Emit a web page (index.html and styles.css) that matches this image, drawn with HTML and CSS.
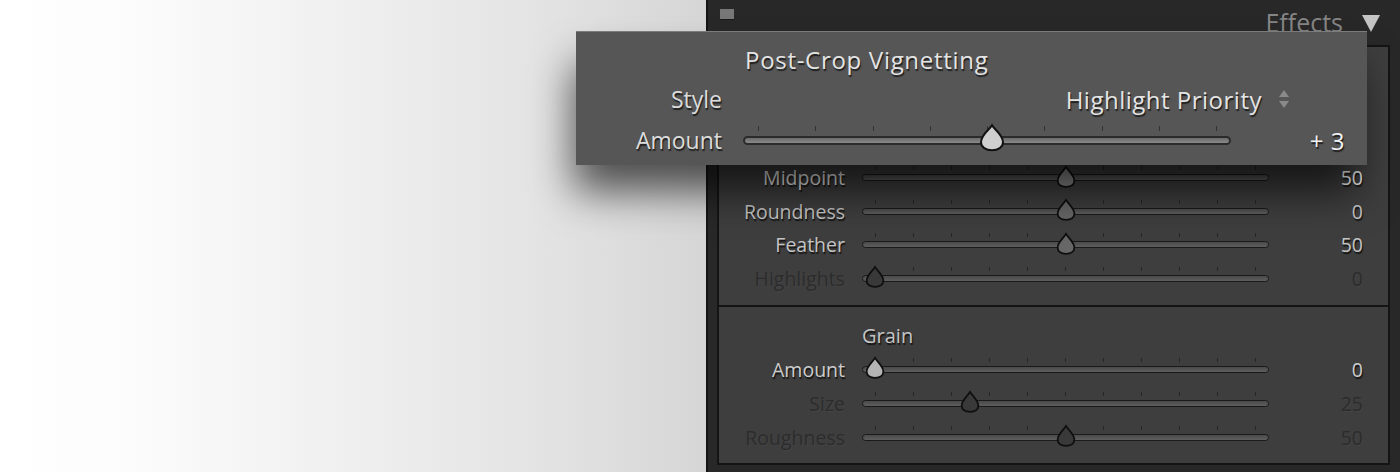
FILE: index.html
```html
<!DOCTYPE html>
<html>
<head>
<meta charset="utf-8">
<link rel="stylesheet" href="styles.css">
</head>
<body>
<div class="screen">
  <div class="canvas"></div>
  <div class="panel">
    <div class="panel-head">
      <span class="sq"></span>
      <span class="head-title">Effects</span>
      <svg class="tri" width="20" height="18" viewBox="0 0 20 18"><polygon points="1,1 19,1 10,18" fill="#c4c4c4"/></svg>
    </div>
    <div class="sections">
      <section class="sec sec-vig">
        <div class="row title-row covered"><span></span><span class="sec-title">Post-Crop Vignetting</span></div>
        <div class="row covered"><span class="lbl">Style</span><span class="sel">Highlight Priority</span></div>
        <div class="row covered">
          <span class="lbl">Amount</span>
          <div class="slider"><div class="ticks"><i></i><i></i><i></i><i></i><i></i><i></i><i></i><i></i><i></i><i></i><i></i></div><div class="knobs"><svg class="thumb" style="left:51%" viewBox="0 0 18 22"><path d="M9 1.5 C11 5 17 9.5 17 14.5 C17 18.5 13.5 20.5 9 20.5 C4.5 20.5 1 18.5 1 14.5 C1 9.5 7 5 9 1.5 Z"/></svg></div></div>
          <span class="val">3</span>
        </div>
        <div class="row shade">
          <span class="lbl">Midpoint</span>
          <div class="slider"><div class="ticks"><i></i><i></i><i></i><i></i><i></i><i></i><i></i><i></i><i></i><i></i><i></i></div><div class="knobs"><svg class="thumb" style="left:50%" viewBox="0 0 18 22"><path d="M9 1.5 C11 5 17 9.5 17 14.5 C17 18.5 13.5 20.5 9 20.5 C4.5 20.5 1 18.5 1 14.5 C1 9.5 7 5 9 1.5 Z"/></svg></div></div>
          <span class="val">50</span>
        </div>
        <div class="row">
          <span class="lbl">Roundness</span>
          <div class="slider"><div class="ticks"><i></i><i></i><i></i><i></i><i></i><i></i><i></i><i></i><i></i><i></i><i></i></div><div class="knobs"><svg class="thumb" style="left:50%" viewBox="0 0 18 22"><path d="M9 1.5 C11 5 17 9.5 17 14.5 C17 18.5 13.5 20.5 9 20.5 C4.5 20.5 1 18.5 1 14.5 C1 9.5 7 5 9 1.5 Z"/></svg></div></div>
          <span class="val">0</span>
        </div>
        <div class="row">
          <span class="lbl">Feather</span>
          <div class="slider"><div class="ticks"><i></i><i></i><i></i><i></i><i></i><i></i><i></i><i></i><i></i><i></i><i></i></div><div class="knobs"><svg class="thumb" style="left:50%" viewBox="0 0 18 22"><path d="M9 1.5 C11 5 17 9.5 17 14.5 C17 18.5 13.5 20.5 9 20.5 C4.5 20.5 1 18.5 1 14.5 C1 9.5 7 5 9 1.5 Z"/></svg></div></div>
          <span class="val">50</span>
        </div>
        <div class="row off">
          <span class="lbl">Highlights</span>
          <div class="slider"><div class="ticks"><i></i><i></i><i></i><i></i><i></i><i></i><i></i><i></i><i></i><i></i><i></i></div><div class="knobs"><svg class="thumb" style="left:0%" viewBox="0 0 18 22"><path d="M9 1.5 C11 5 17 9.5 17 14.5 C17 18.5 13.5 20.5 9 20.5 C4.5 20.5 1 18.5 1 14.5 C1 9.5 7 5 9 1.5 Z"/></svg></div></div>
          <span class="val">0</span>
        </div>
      </section>
      <section class="sec sec-grain">
        <div class="row title-row"><span></span><span class="sec-title">Grain</span></div>
        <div class="row light">
          <span class="lbl">Amount</span>
          <div class="slider"><div class="ticks"><i></i><i></i><i></i><i></i><i></i><i></i><i></i><i></i><i></i><i></i><i></i></div><div class="knobs"><svg class="thumb" style="left:0%" viewBox="0 0 18 22"><path d="M9 1.5 C11 5 17 9.5 17 14.5 C17 18.5 13.5 20.5 9 20.5 C4.5 20.5 1 18.5 1 14.5 C1 9.5 7 5 9 1.5 Z"/></svg></div></div>
          <span class="val">0</span>
        </div>
        <div class="row off">
          <span class="lbl">Size</span>
          <div class="slider"><div class="ticks"><i></i><i></i><i></i><i></i><i></i><i></i><i></i><i></i><i></i><i></i><i></i></div><div class="knobs"><svg class="thumb" style="left:25%" viewBox="0 0 18 22"><path d="M9 1.5 C11 5 17 9.5 17 14.5 C17 18.5 13.5 20.5 9 20.5 C4.5 20.5 1 18.5 1 14.5 C1 9.5 7 5 9 1.5 Z"/></svg></div></div>
          <span class="val">25</span>
        </div>
        <div class="row off">
          <span class="lbl">Roughness</span>
          <div class="slider"><div class="ticks"><i></i><i></i><i></i><i></i><i></i><i></i><i></i><i></i><i></i><i></i><i></i></div><div class="knobs"><svg class="thumb" style="left:50%" viewBox="0 0 18 22"><path d="M9 1.5 C11 5 17 9.5 17 14.5 C17 18.5 13.5 20.5 9 20.5 C4.5 20.5 1 18.5 1 14.5 C1 9.5 7 5 9 1.5 Z"/></svg></div></div>
          <span class="val">50</span>
        </div>
      </section>
    </div>
  </div>

  <div class="popup">
    <div class="prow ptitle-row"><span></span><span class="ptitle">Post-Crop Vignetting</span></div>
    <div class="prow">
      <span class="plbl">Style</span>
      <span class="psel">Highlight Priority<svg class="updown" width="12" height="20" viewBox="0 0 12 20"><polygon points="6,1 11,8 1,8" fill="#8a8a8a"/><polygon points="1,12 11,12 6,19" fill="#8a8a8a"/></svg></span>
    </div>
    <div class="prow">
      <span class="plbl">Amount</span>
      <div class="pslider"><div class="pticks"><i></i><i></i><i></i><i></i><i></i><i></i><i></i><i></i><i></i></div><div class="pknobs"><svg class="pthumb" style="left:51%" viewBox="0 0 24 28"><path d="M12 1.5 C14.5 6 23 11 23 18.5 C23 23.5 18 26.5 12 26.5 C6 26.5 1 23.5 1 18.5 C1 11 9.5 6 12 1.5 Z"/></svg></div></div>
      <span class="pval">+ 3</span>
    </div>
  </div>
</div>
</body>
</html>
```

FILE: styles.css
```css
* { box-sizing: border-box; }
html, body { margin: 0; padding: 0; }
body {
  width: 1400px;
  height: 472px;
  overflow: hidden;
  font-family: "Open Sans", "Noto Sans", "DejaVu Sans", sans-serif;
}
.screen {
  position: relative;
  display: flex;
  width: 1400px;
  height: 472px;
}
.canvas {
  width: 706px;
  flex: none;
  background: linear-gradient(to right, #ffffff 0%, #fcfcfc 18%, #f1f1f1 45%, #e4e4e4 75%, #d6d6d6 100%);
}
.panel {
  flex: 1;
  background: #282828;
  border-left: 2px solid #151515;
  display: flex;
  flex-direction: column;
}
.panel-head {
  height: 45px;
  display: flex;
  align-items: flex-start;
  padding: 0 19px 0 12px;
}
.sq {
  width: 14px;
  height: 10px;
  margin-top: 9px;
  background: #777;
  box-shadow: 0 1px 0 #1a1a1a;
}
.head-title {
  margin-left: auto;
  margin-top: 5px;
  font-size: 25px;
  color: #858585;
  line-height: 34px;
}
.tri {
  margin-left: 18px;
  margin-top: 14px;
}
.sections {
  margin: 0 10px 0 9px;
  border: 2px solid #141414;
  display: flex;
  flex-direction: column;
}
.sec {
  background: #3e3e3e;
}
.sec-vig {
  padding: 11px 0 10px;
  border-bottom: 2px solid #141414;
}
.sec-grain {
  padding: 11px 0 9px;
}
.row {
  display: grid;
  grid-template-columns: 126px 407px 1fr;
  column-gap: 17px;
  align-items: center;
  height: 33.5px;
  padding-right: 25px;
}
.row.covered { visibility: hidden; }
.sec-grain .row { height: 34px; }
.title-row { height: 36px; }
.sec-grain .title-row { height: 34px; }
.lbl, .sec-title, .val, .sel {
  font-size: 19.5px;
  color: #c4c4c4;
  text-shadow: 1px 2px 1px rgba(0,0,0,0.7);
  white-space: nowrap;
}
.lbl { text-align: right; }
.sec-title { font-size: 20px; }
.val { text-align: right; }
.sel { grid-column: 2 / 4; text-align: right; }
.row.shade .lbl, .row.shade .val { color: #f0f0f0; }
.row.shade .thumb path { fill: #8a8a8a; }
.row.off .lbl, .row.off .val {
  color: #2c2c2c;
  text-shadow: 1px 1px 0 rgba(255,255,255,0.04);
}
.row.light .lbl, .row.light .val { color: #cdcdcd; }

.slider {
  position: relative;
  height: 7px;
  border-radius: 4px;
  border: 1.5px solid #1a1a1a;
  background: linear-gradient(#4a4a4a, #5e5e5e);
}
.ticks {
  position: absolute;
  left: 12px;
  right: 12px;
  top: -9px;
  height: 4px;
  display: flex;
  justify-content: space-between;
}
.ticks i {
  display: block;
  width: 1px;
  height: 4px;
  background: #262626;
}
.knobs {
  position: absolute;
  left: 12px;
  right: 12px;
  top: 0;
  bottom: 0;
}
.thumb {
  position: absolute;
  top: 50%;
  width: 19px;
  height: 23px;
  transform: translate(-50%, -55%);
  overflow: visible;
}
.thumb path {
  fill: #676767;
  stroke: #0f0f0f;
  stroke-width: 1.7;
}
.row.off .thumb path { fill: #393939; }
.row.light .thumb path { fill: #b4b4b4; }

/* popup */
.popup {
  position: absolute;
  left: 576px;
  top: 31px;
  width: 791px;
  height: 134px;
  background: #565656;
  border-top: 1px solid #7c7c7c;
  box-shadow: -6px 30px 42px -4px rgba(0,0,0,0.65);
  padding: 8px 22px 5px 0;
}
.prow {
  display: grid;
  grid-template-columns: 146px 488px 1fr;
  column-gap: 21px;
  align-items: center;
  height: 40px;
}
.ptitle-row { height: 38px; }
.prow:nth-child(2) { height: 42px; }
.plbl, .ptitle, .psel, .pval {
  font-size: 24px;
  letter-spacing: 0.5px;
  color: #e4e4e4;
  text-shadow: 1px 2px 1px rgba(0,0,0,0.65);
  white-space: nowrap;
}
.plbl { text-align: right; color: #dcdcdc; letter-spacing: 0; font-size: 23px; }
.ptitle { padding-left: 2px; letter-spacing: 0.7px; }
.psel {
  grid-column: 2 / 4;
  display: flex;
  justify-content: flex-end;
  align-items: center;
  padding-right: 55px;
}
.updown { margin-left: 16px; }
.pval { text-align: right; color: #f2f2f2; }
.pslider {
  position: relative;
  height: 9px;
  border-radius: 5px;
  border: 2px solid #2b2b2b;
  background: linear-gradient(#6a6a6a, #8a8a8a);
}
.pticks {
  position: absolute;
  left: 13px;
  right: 12px;
  top: -12px;
  height: 5px;
  display: flex;
  justify-content: space-between;
}
.pticks i {
  display: block;
  width: 1px;
  height: 5px;
  background: #333;
}
.pknobs {
  position: absolute;
  left: 13px;
  right: 12px;
  top: 0;
  bottom: 0;
}
.pthumb {
  position: absolute;
  top: 50%;
  width: 24px;
  height: 28px;
  transform: translate(-50%, -58%);
  overflow: visible;
}
.pthumb path {
  fill: #cfcfcf;
  stroke: #111;
  stroke-width: 2;
}
```
